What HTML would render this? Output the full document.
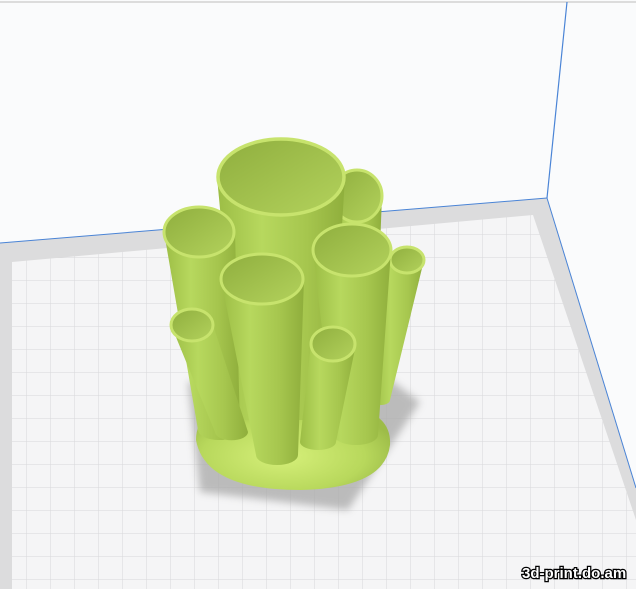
<!DOCTYPE html>
<html><head><meta charset="utf-8"><style>
html,body{margin:0;padding:0;background:#fafbfc;overflow:hidden}
svg{display:block}
</style></head><body>
<svg width="636" height="589" viewBox="0 0 636 589" xmlns="http://www.w3.org/2000/svg">
<defs>
<pattern id="grid" width="24" height="23" patternUnits="userSpaceOnUse" x="3" y="5">
<rect width="24" height="23" fill="#f5f5f6"/>
<path d="M24 0V23M0 23H24" stroke="#d8d8da" stroke-width="1" fill="none"/>
</pattern>
<linearGradient id="g" x1="0" x2="1" y1="0" y2="0">
<stop offset="0" stop-color="#9cbd45"/><stop offset="0.35" stop-color="#b7d85e"/><stop offset="0.7" stop-color="#a6c64e"/><stop offset="1" stop-color="#8fae3c"/>
</linearGradient>
<linearGradient id="gi" x1="0" x2="1" y1="0" y2="1">
<stop offset="0" stop-color="#8fae3e"/><stop offset="1" stop-color="#b3d25c"/>
</linearGradient>
<radialGradient id="base" cx="0.45" cy="0.6" r="0.6">
<stop offset="0" stop-color="#d6f07a"/><stop offset="0.7" stop-color="#b8d85c"/><stop offset="1" stop-color="#9dbc48"/>
</radialGradient>
<filter id="blur"><feGaussianBlur stdDeviation="4"/></filter>
</defs>
<line x1="0" y1="2" x2="636" y2="2" stroke="#c9c9c9" stroke-width="1.2"/>
<line x1="567" y1="2" x2="547" y2="198" stroke="#4a84d6" stroke-width="1.2"/>
<!-- plate -->
<polygon points="0,243 547,198 636,488 636,589 0,589" fill="#dcdcdd"/>
<polygon points="12,262 533,215 636,520 636,589 12,589" fill="url(#grid)"/>
<line x1="0" y1="243" x2="547" y2="198" stroke="#4a84d6" stroke-width="1"/>
<line x1="547" y1="198" x2="636" y2="488" stroke="#4a84d6" stroke-width="1"/>
<!-- shadow -->
<polygon points="188,382 380,372 420,402 348,510 200,492" fill="#a8a8a8" opacity="0.75" filter="url(#blur)"/>
<!-- base -->
<path d="M196,440 Q196,405 250,405 L340,405 Q392,410 390,445 Q385,488 300,490 Q205,490 196,440Z" fill="url(#base)"/>
<!-- back right tube -->
<path d="M332,196 L348,300 L378,300 L382,196Z" fill="url(#g)"/>
<ellipse cx="357" cy="196" rx="25" ry="26" fill="url(#gi)" stroke="#c7e36d" stroke-width="3"/>
<!-- far right small -->
<path d="M390,260 L372,400 A9 5 0 0 0 390,400 L424,260Z" fill="url(#g)"/>
<ellipse cx="407" cy="260" rx="17" ry="13" fill="url(#gi)" stroke="#c7e36d" stroke-width="3"/>
<!-- big central -->
<path d="M217,177 L240,420 L330,420 L345,177Z" fill="url(#g)"/>
<ellipse cx="281" cy="177" rx="63" ry="38" fill="url(#gi)" stroke="#c7e36d" stroke-width="3.5"/>
<!-- left back -->
<path d="M164,232 L198,430 A21 10 0 0 0 240,430 L235,232Z" fill="url(#g)"/>
<ellipse cx="199" cy="232" rx="35" ry="25" fill="url(#gi)" stroke="#c7e36d" stroke-width="3"/>
<!-- right tube -->
<path d="M313,250 L334,435 A22 10 0 0 0 378,435 L391,250Z" fill="url(#g)"/>
<ellipse cx="352" cy="250" rx="39" ry="26" fill="url(#gi)" stroke="#c7e36d" stroke-width="3"/>
<!-- left small -->
<path d="M171,325 L215,432 A16 8 0 0 0 248,432 L213,325Z" fill="url(#g)"/>
<ellipse cx="192" cy="325" rx="21" ry="16" fill="url(#gi)" stroke="#c7e36d" stroke-width="3"/>
<!-- middle front -->
<path d="M221,279 L256,455 A21 10 0 0 0 298,455 L304,279Z" fill="url(#g)"/>
<ellipse cx="262" cy="279" rx="41" ry="25" fill="url(#gi)" stroke="#c7e36d" stroke-width="3"/>
<!-- front right small -->
<path d="M311,344 L300,442 A18 8 0 0 0 336,442 L356,344Z" fill="url(#g)"/>
<ellipse cx="333" cy="344" rx="22" ry="17" fill="url(#gi)" stroke="#c7e36d" stroke-width="3"/>
<text x="522" y="578" font-family="Liberation Sans, sans-serif" font-weight="bold" font-size="15" fill="#fff" stroke="#000" stroke-width="2.5" paint-order="stroke">3d-print.do.am</text>
</svg>
</body></html>
